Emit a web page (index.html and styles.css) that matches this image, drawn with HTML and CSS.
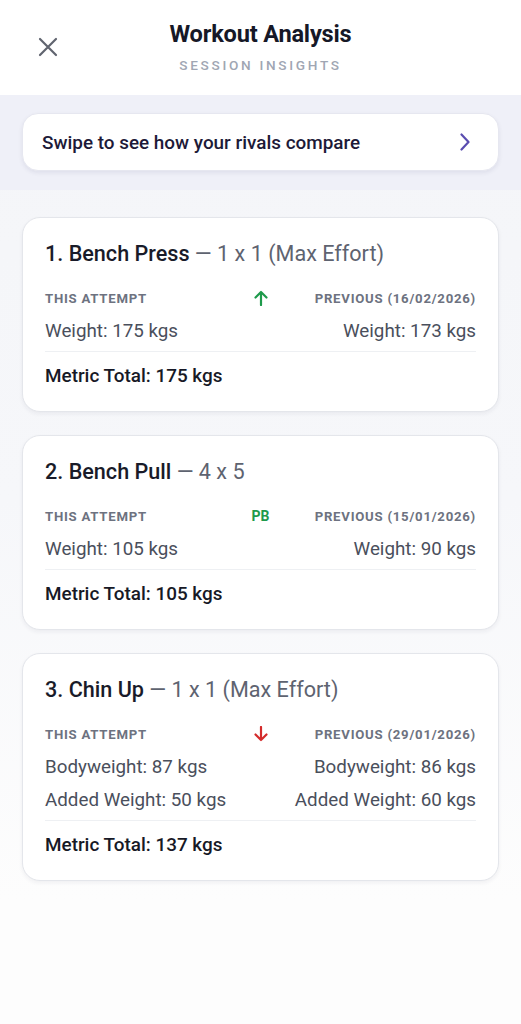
FILE: index.html
```html
<!DOCTYPE html>
<html lang="en">
<head>
<meta charset="utf-8">
<title>Workout Analysis</title>
<link rel="stylesheet" href="styles.css">
</head>
<body>
<div class="screen">
  <header class="topbar">
    <button class="close" aria-label="Close">
      <svg width="20" height="20" viewBox="0 0 20 20"><path d="M2 2 L18 18 M18 2 L2 18" stroke="#60646f" stroke-width="2.2" stroke-linecap="round" fill="none"/></svg>
    </button>
    <div class="titles">
      <h1 class="title">Workout Analysis</h1>
      <div class="subtitle">SESSION INSIGHTS</div>
    </div>
    <div></div>
  </header>

  <section class="banner-wrap">
    <div class="banner">
      <span class="banner-text">Swipe to see how your rivals compare</span>
      <svg class="chev" width="12" height="18" viewBox="0 0 12 18"><path d="M2.5 1.5 L9.5 9 L2.5 16.5" stroke="#5a4db0" stroke-width="2.2" stroke-linecap="round" stroke-linejoin="round" fill="none"/></svg>
    </div>
  </section>

  <main class="list">
    <article class="card">
      <h2 class="ex-title"><span class="ex-name">1. Bench Press</span><span class="ex-meta"> — 1 x 1 (Max Effort)</span></h2>
      <div class="labels">
        <span class="lbl">THIS ATTEMPT</span>
        <span class="ind">
          <svg width="14" height="16" viewBox="0 0 14 16"><path d="M7 15 V2 M1.5 7.5 L7 2 L12.5 7.5" stroke="#1e9a4b" stroke-width="2.2" stroke-linecap="round" stroke-linejoin="round" fill="none"/></svg>
        </span>
        <span class="lbl right">PREVIOUS (16/02/2026)</span>
      </div>
      <div class="vals">
        <span>Weight: 175 kgs</span><span class="right">Weight: 173 kgs</span>
      </div>
      <div class="total">Metric Total: 175 kgs</div>
    </article>

    <article class="card">
      <h2 class="ex-title"><span class="ex-name">2. Bench Pull</span><span class="ex-meta"> — 4 x 5</span></h2>
      <div class="labels">
        <span class="lbl">THIS ATTEMPT</span>
        <span class="ind pb">PB</span>
        <span class="lbl right">PREVIOUS (15/01/2026)</span>
      </div>
      <div class="vals">
        <span>Weight: 105 kgs</span><span class="right">Weight: 90 kgs</span>
      </div>
      <div class="total">Metric Total: 105 kgs</div>
    </article>

    <article class="card">
      <h2 class="ex-title"><span class="ex-name">3. Chin Up</span><span class="ex-meta"> — 1 x 1 (Max Effort)</span></h2>
      <div class="labels">
        <span class="lbl">THIS ATTEMPT</span>
        <span class="ind">
          <svg width="14" height="16" viewBox="0 0 14 16"><path d="M7 1 V14 M1.5 8.5 L7 14 L12.5 8.5" stroke="#d42b2b" stroke-width="2.2" stroke-linecap="round" stroke-linejoin="round" fill="none"/></svg>
        </span>
        <span class="lbl right">PREVIOUS (29/01/2026)</span>
      </div>
      <div class="vals">
        <span>Bodyweight: 87 kgs</span><span class="right">Bodyweight: 86 kgs</span>
        <span>Added Weight: 50 kgs</span><span class="right">Added Weight: 60 kgs</span>
      </div>
      <div class="total">Metric Total: 137 kgs</div>
    </article>
  </main>
</div>
</body>
</html>
```

FILE: styles.css
```css
* { box-sizing: border-box; }
html, body { margin: 0; padding: 0; }
body {
  font-family: Roboto, "Noto Sans", "Liberation Sans", sans-serif;
  background: #fdfdfe;
  color: #1b1d2b;
}
.screen {
  width: 521px;
  min-height: 1024px;
  display: flex;
  flex-direction: column;
  background: linear-gradient(#f4f5f8 0px, #f6f7fa 500px, #fdfdfd 900px, #fdfdfd 1024px);
}
.topbar {
  background: #ffffff;
  height: 95px;
  display: grid;
  grid-template-columns: 1fr auto 1fr;
  padding-top: 20px;
}
.close {
  justify-self: start;
  align-self: start;
  margin: 17px 0 0 38px;
  padding: 0;
  border: 0;
  background: none;
  width: 20px;
  height: 20px;
  display: flex;
}
.titles { text-align: center; }
.title {
  margin: 0;
  font-size: 23.6px;
  line-height: 28px;
  font-weight: 700;
  color: #161827;
  letter-spacing: -0.2px;
}
.subtitle {
  margin-top: 8px;
  font-size: 13.6px;
  line-height: 18px;
  font-weight: 500;
  letter-spacing: 2.7px;
  color: #a0a6b3;
}
.banner-wrap {
  background: #eff0f8;
  padding: 18px 22px 19px;
}
.banner {
  height: 58px;
  background: #ffffff;
  border-radius: 16px;
  border: 1px solid #e6e7f0;
  box-shadow: 0 2px 4px rgba(40, 40, 90, 0.08);
  display: flex;
  align-items: center;
  justify-content: space-between;
  padding: 0 27px 0 19px;
}
.banner-text {
  font-size: 18.9px;
  font-weight: 500;
  color: #1d1a38;
}
.chev { display: block; }
.list {
  padding: 27px 22px 40px;
  display: flex;
  flex-direction: column;
  gap: 23px;
}
.card {
  background: #ffffff;
  border: 1px solid #e4e6eb;
  border-radius: 18px;
  box-shadow: 0 2px 4px rgba(30, 30, 60, 0.06);
  padding: 23px 22px 23px;
}
.ex-title {
  margin: 0;
  font-size: 21.6px;
  line-height: 26px;
  font-weight: 400;
}
.ex-name { font-weight: 500; color: #191b29; }
.ex-meta { color: #5e6370; }
.labels {
  margin-top: 19px;
  display: grid;
  grid-template-columns: 1fr auto 1fr;
  align-items: center;
  height: 24px;
}
.lbl {
  font-size: 13.2px;
  font-weight: 700;
  letter-spacing: 0.75px;
  color: #6d7280;
}
.right { text-align: right; }
.ind {
  display: flex;
  justify-content: center;
  width: 20px;
}
.pb {
  font-size: 14px;
  font-weight: 700;
  color: #1f9a4b;
  width: auto;
}
.vals {
  margin-top: 9px;
  display: grid;
  grid-template-columns: 1fr 1fr;
  row-gap: 9px;
  font-size: 18.8px;
  line-height: 24px;
  color: #4a4f5c;
  padding-bottom: 8px;
  border-bottom: 1px solid #eef0f3;
}
.total {
  margin-top: 12px;
  font-size: 18.9px;
  line-height: 24px;
  font-weight: 500;
  color: #171926;
}
```
